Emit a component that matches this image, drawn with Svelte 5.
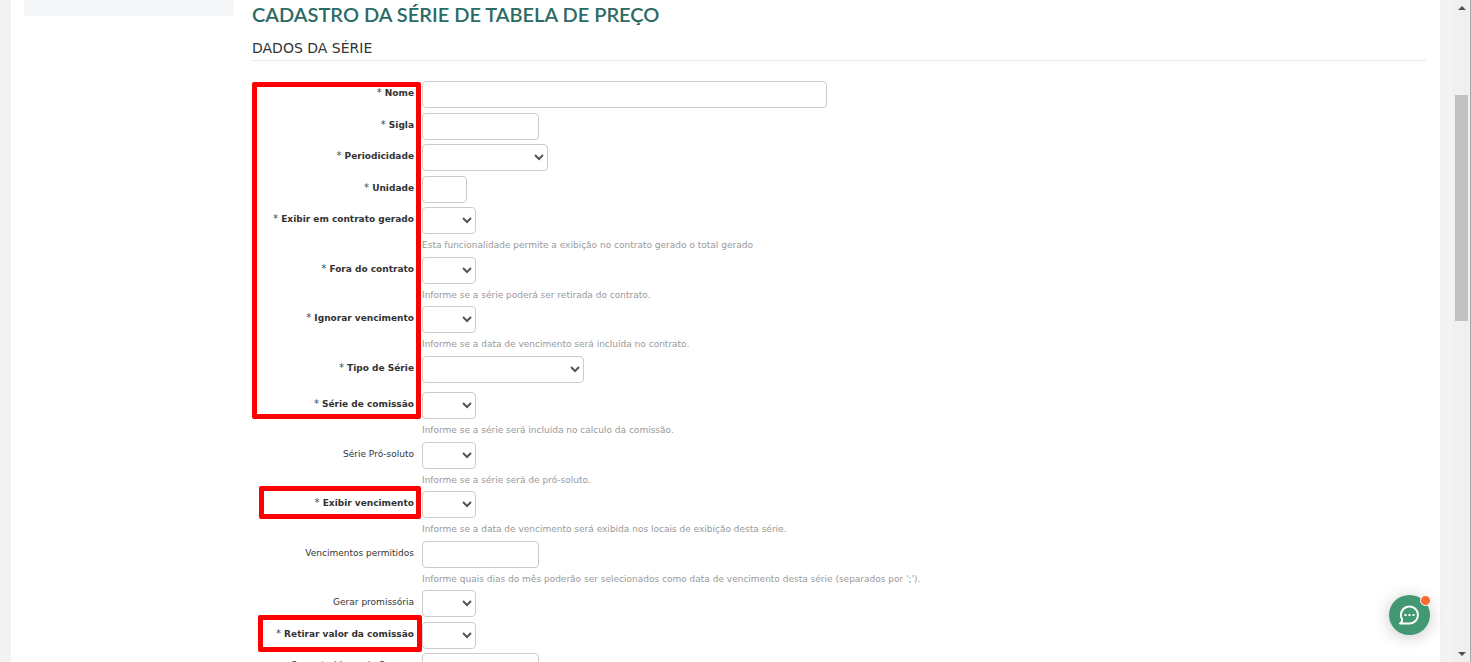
<script lang="ts">
  interface Field {
    id: string;
    label: string;
    kind: 'text' | 'select';
    size: string;
    required?: boolean;
    hint?: string;
    spaced?: boolean;
  }

  const fields: Field[] = [
    { id: 'nome', label: 'Nome', kind: 'text', size: 'xl', required: true },
    { id: 'sigla', label: 'Sigla', kind: 'text', size: 'md', required: true },
    { id: 'periodicidade', label: 'Periodicidade', kind: 'select', size: 'period', required: true },
    { id: 'unidade', label: 'Unidade', kind: 'text', size: 'xs', required: true },
    { id: 'exibir-contrato', label: 'Exibir em contrato gerado', kind: 'select', size: 'sm', required: true, hint: 'Esta funcionalidade permite a exibição no contrato gerado o total gerado' },
    { id: 'fora-contrato', label: 'Fora do contrato', kind: 'select', size: 'sm', required: true, hint: 'Informe se a série poderá ser retirada do contrato.' },
    { id: 'ignorar-vencimento', label: 'Ignorar vencimento', kind: 'select', size: 'sm', required: true, hint: 'Informe se a data de vencimento será incluída no contrato.' },
    { id: 'tipo', label: 'Tipo de Série', kind: 'select', size: 'lg', required: true, spaced: true },
    { id: 'comissao', label: 'Série de comissão', kind: 'select', size: 'sm', required: true, hint: 'Informe se a série será incluída no calculo da comissão.' },
    { id: 'pro-soluto', label: 'Série Pró-soluto', kind: 'select', size: 'sm', hint: 'Informe se a série será de pró-soluto.' },
    { id: 'exibir-vencimento', label: 'Exibir vencimento', kind: 'select', size: 'sm', required: true, hint: 'Informe se a data de vencimento será exibida nos locais de exibição desta série.' },
    { id: 'vencimentos', label: 'Vencimentos permitidos', kind: 'text', size: 'md', hint: "Informe quais dias do mês poderão ser selecionados como data de vencimento desta série (separados por ';')." },
    { id: 'promissoria', label: 'Gerar promissória', kind: 'select', size: 'sm' },
    { id: 'retirar-valor', label: 'Retirar valor da comissão', kind: 'select', size: 'sm', required: true },
    { id: 'juros', label: 'Semestral Juros de Compra', kind: 'text', size: 'md' },
  ];
</script>

<div class="page">
  <div class="panel">
    <aside class="sidebar"></aside>

    <main class="content">
      <h1>CADASTRO DA SÉRIE DE TABELA DE PREÇO</h1>
      <h2>DADOS DA SÉRIE</h2>

      <form class="form">
        {#each fields as field (field.id)}
          <div class="row" class:spaced={field.spaced}>
            <label for={field.id} class:required={field.required}>
              {#if field.required}<span>*</span>{/if}
              {field.label}
            </label>
            <div class="control">
              {#if field.kind === 'select'}
                <select id={field.id} class={field.size}><option value=""></option></select>
              {:else}
                <input id={field.id} type="text" class={field.size} />
              {/if}
              {#if field.hint}<p class="hint">{field.hint}</p>{/if}
            </div>
          </div>
        {/each}

        <div class="mark mark-main"></div>
        <div class="mark mark-due"></div>
        <div class="mark mark-value"></div>
      </form>
    </main>
  </div>

  <div class="scrollbar">
    <svg width="8" height="5" viewBox="0 0 8 5"><path d="M4 0L8 4H0Z" fill="#505050" /></svg>
    <div class="track"><div class="thumb"></div></div>
    <svg width="8" height="5" viewBox="0 0 8 5"><path d="M0 0H8L4 4Z" fill="#505050" /></svg>
  </div>

  <button class="chat" aria-label="Chat">
    <svg width="21" height="20" viewBox="0 0 21 20" fill="none" stroke="#fff" stroke-width="2">
      <path d="M1 18.5H10.5A8.5 8.5 0 1 0 3 14.2C3.4 16 2.6 17.5 1 18.5Z" stroke-linejoin="round" />
      <path d="M5.5 10H7.5M9.5 10H11.5M13.5 10H15.5" />
    </svg>
    <span class="badge"></span>
  </button>
</div>

<style>
  :global(body) { background: #f3f3f3; }

  .page {
    display: flex;
    height: 100vh;
    overflow: hidden;
    box-sizing: border-box;
    padding-left: 11px;
    border-right: 1px solid #a8a8a8;
    background: #f3f3f3;
    color: #333;
    font-family: Verdana, "DejaVu Sans", sans-serif;
    font-size: 9px;
  }

  .panel {
    display: flex;
    flex: 1;
    gap: 18px;
    min-width: 0;
    margin-right: 13px;
    padding: 0 14px 0 13px;
    background: #fff;
  }

  .sidebar {
    flex: 0 0 210px;
    height: 16px;
    border-radius: 0 0 4px 4px;
    background: #f5f6f8;
  }

  .content { flex: 1; min-width: 0; }

  h1 {
    margin: 0;
    color: #2c6b64;
    font: 600 20px/28px Lato, sans-serif;
  }
  h2 {
    margin: 8px 0 20px;
    border-bottom: 1px solid #e8e8e8;
    font-size: 14px;
    font-weight: 400;
    line-height: 24px;
  }

  .form { position: relative; }

  .row {
    display: flex;
    gap: 8px;
    padding-bottom: 4px;
  }
  .row:nth-child(odd) { padding-bottom: 5px; }
  .row.spaced { padding-bottom: 9px; }

  label {
    flex: 0 0 162px;
    padding-top: 4px;
    line-height: 16px;
    text-align: right;
    white-space: nowrap;
  }
  label.required { font-weight: 700; }
  label span { font-weight: 400; font-size: 10px; color: #2f4f6f; }

  .control { flex: 1; min-width: 0; }

  input, select {
    display: block;
    box-sizing: border-box;
    height: 27px;
    padding: 4px;
    border: 1px solid #ccc;
    border-radius: 4px;
    background-color: #fff;
    color: #555;
    font: 13px "DejaVu Sans", sans-serif;
  }
  .xs { width: 45px; }
  .sm { width: 54px; }
  .md { width: 117px; }
  .period { width: 126px; }
  .lg { width: 162px; }
  .xl { width: 405px; }

  .hint {
    margin: 4px 0 0;
    color: #999;
    line-height: 14px;
  }

  .mark {
    position: absolute;
    box-sizing: border-box;
    border: 5px solid #f00;
    border-radius: 2px;
    pointer-events: none;
  }
  .mark-main { top: 1px; left: 0; width: 169px; height: 337px; }
  .mark-due { top: 405px; left: 7px; width: 162px; height: 33px; }
  .mark-value { top: 534px; left: 6px; width: 164px; height: 37px; }

  .scrollbar {
    display: flex;
    flex: 0 0 17px;
    flex-direction: column;
    align-items: center;
    box-sizing: border-box;
    padding: 6px 2px 5px;
    background: #f0f0f0;
  }
  .track { flex: 1; align-self: stretch; padding-top: 84px; }
  .thumb { height: 226px; background: #c1c1c1; }

  .chat {
    position: fixed;
    right: 41px;
    bottom: 27px;
    display: flex;
    align-items: center;
    justify-content: center;
    width: 41px;
    height: 40px;
    padding: 0;
    border: 0;
    border-radius: 50%;
    background: #419873;
    box-shadow: 0 2px 16px rgba(0, 0, 0, .22);
  }
  .badge {
    position: absolute;
    top: 0;
    right: -1px;
    width: 9px;
    height: 9px;
    border: 1px solid #fff;
    border-radius: 50%;
    background: #ff6b2c;
  }
</style>
